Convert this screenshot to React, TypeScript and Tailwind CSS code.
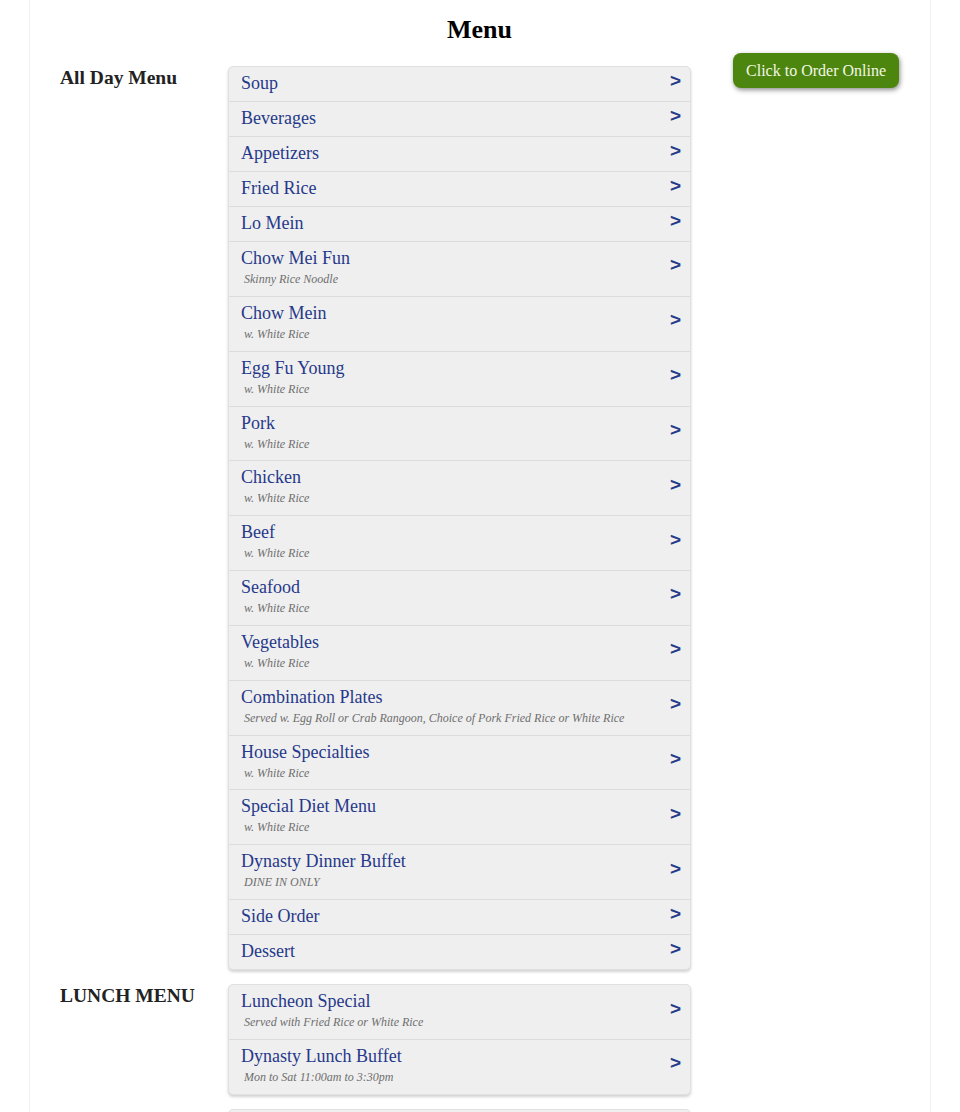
import React from "react";

type Item = { name: string; sub?: string };

const allDay: Item[] = [
  { name: "Soup" },
  { name: "Beverages" },
  { name: "Appetizers" },
  { name: "Fried Rice" },
  { name: "Lo Mein" },
  { name: "Chow Mei Fun", sub: "Skinny Rice Noodle" },
  { name: "Chow Mein", sub: "w. White Rice" },
  { name: "Egg Fu Young", sub: "w. White Rice" },
  { name: "Pork", sub: "w. White Rice" },
  { name: "Chicken", sub: "w. White Rice" },
  { name: "Beef", sub: "w. White Rice" },
  { name: "Seafood", sub: "w. White Rice" },
  { name: "Vegetables", sub: "w. White Rice" },
  { name: "Combination Plates", sub: "Served w. Egg Roll or Crab Rangoon, Choice of Pork Fried Rice or White Rice" },
  { name: "House Specialties", sub: "w. White Rice" },
  { name: "Special Diet Menu", sub: "w. White Rice" },
  { name: "Dynasty Dinner Buffet", sub: "DINE IN ONLY" },
  { name: "Side Order" },
  { name: "Dessert" },
];

const lunch: Item[] = [
  { name: "Luncheon Special", sub: "Served with Fried Rice or White Rice" },
  { name: "Dynasty Lunch Buffet", sub: "Mon to Sat 11:00am to 3:30pm" },
];

function Row({ item }: { item: Item }) {
  return (
    <div className="flex items-center border-b border-[#dcdcdc] last:border-b-0 pl-[12px] pr-[9px] pt-[6px] pb-[8px]">
      <div className="flex-1 min-w-0">
        <div className="text-[18px] leading-[20px] text-[#26398a]">{item.name}</div>
        {item.sub && (
          <div className="mt-[4px] italic text-[12px] leading-[15.85px] text-[#6e6e6e] pl-[3px]">{item.sub}</div>
        )}
      </div>
      <div
        className="font-bold text-[19px] leading-[20px] text-[#26398a] -mt-[5px]"
        style={{ fontFamily: '"Liberation Sans", Arial, sans-serif' }}
      >
        &gt;
      </div>
    </div>
  );
}

function Section({ title, items }: { title: string; items: Item[] }) {
  return (
    <div className="flex mb-[14px]">
      <div className="w-[168px] shrink-0 pt-[1px] text-[19.5px] leading-[22px] font-bold text-[#222222]">{title}</div>
      <div className="w-[463px] shrink-0 bg-[#efefef] border border-[#e0e0e0] rounded-[5px] shadow-[0_2px_3px_rgba(0,0,0,0.18)] overflow-hidden">
        {items.map((it) => (
          <Row key={it.name} item={it} />
        ))}
      </div>
    </div>
  );
}

export default function App() {
  return (
    <div
      className="min-h-[1112px] bg-white"
      style={{ fontFamily: '"Liberation Serif", "Times New Roman", serif' }}
    >
      <div className="mx-[29px] border-x border-[#efefef] min-h-[1112px] pl-[30px] pr-[31px] pt-[14px]">
        <h1 className="text-center text-[26px] leading-[32px] font-bold text-black">Menu</h1>
        <div className="flex mt-[6px]">
          <div className="flex flex-col">
            <div className="mt-[14px]">
              <Section title="All Day Menu" items={allDay} />
              <Section title="LUNCH MENU" items={lunch} />
              <div className="flex">
                <div className="w-[168px] shrink-0" />
                <div className="w-[463px] h-[20px] bg-[#efefef] border border-[#e0e0e0] rounded-t-[5px]" />
              </div>
            </div>
          </div>
          <div className="flex-1 flex justify-end">
            <div>
              <button className="mt-[1px] h-[35px] px-[13px] rounded-[8px] bg-[#4c860e] text-[#f4f6e6] text-[16px] leading-[20px] shadow-[1px_2px_5px_rgba(0,0,0,0.45)]">
                Click to Order Online
              </button>
            </div>
          </div>
        </div>
      </div>
    </div>
  );
}
